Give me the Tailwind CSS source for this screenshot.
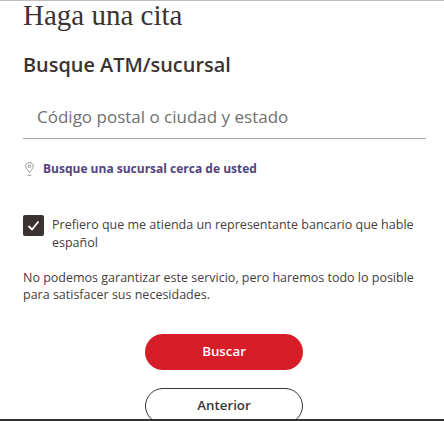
<!DOCTYPE html>
<html lang="es">
<head>
    <meta charset="UTF-8">
    <meta name="viewport" content="width=device-width, initial-scale=1.0">
    <title>Haga una cita</title>
    <script src="https://cdn.jsdelivr.net/npm/@tailwindcss/browser@4"></script>
</head>
<body class="bg-white font-['Open_Sans',sans-serif] text-[#45403e]">
    <div class="h-[421px] w-[444px] overflow-hidden">
        <div class="h-[419px] overflow-hidden border-t border-[#bdbdbd] pl-[23px] pr-[18px]">
            <!-- Encabezado -->
            <h1 class="font-['Liberation_Serif',serif] text-[29px] leading-[28px] text-[#3b3331]">Haga una cita</h1>
            <h2 class="mt-[22px] text-[19.900px] font-semibold leading-[28px] text-[#3b3331]">Busque ATM/sucursal</h2>

            <!-- Campo de busqueda -->
            <div class="mt-[18px] flex h-[42px] items-center border-b border-[#a8a8a8] pb-[1px] pl-[14px] text-[17px] text-[#707070]">
                Código postal o ciudad y estado
            </div>

            <a class="mt-[20px] flex items-center gap-[9px] text-[12px] font-bold leading-[20px] text-[#4f4483]">
                <svg class="ml-[2px] h-[16px] w-[9px] shrink-0" viewBox="0 0 10 16" fill="none" stroke="#777" stroke-width="0.8">
                    <path d="M5 .8C2.6.8.8 2.6.8 4.9c0 1.9 2.6 5 4.2 7 1.6-2 4.2-5.1 4.2-7C9.200 2.6 7.400.8 5 .8z"/>
                    <circle cx="5" cy="4.800" r="1.500"/>
                    <path d="M3 15h4"/>
                </svg>
                Busque una sucursal cerca de usted
            </a>

            <!-- Preferencia -->
            <label class="mt-[36px] flex gap-[8px] text-[12.500px] leading-[18px]">
                <span class="flex h-[21px] w-[21px] shrink-0 items-center justify-center rounded-[2px] bg-[#3b3331]">
                    <svg class="h-[13px] w-[13px]" viewBox="0 0 13 13" fill="none" stroke="#fff" stroke-width="1.800">
                        <path d="M1.500 7l3.500 3.500L11.500 2.500"/>
                    </svg>
                </span>
                <span class="pt-[1px]">Prefiero que me atienda un representante bancario que hable español</span>
            </label>

            <p class="mt-[17px] text-[12.500px] leading-[17px]">No podemos garantizar este servicio, pero haremos todo lo posible para satisfacer sus necesidades.</p>

            <!-- Botones -->
            <div class="mt-[31px] flex flex-col items-center gap-[18px] pr-[1px]">
                <button class="h-[36px] w-[158px] rounded-full bg-[#d71e28] text-[13.300px] font-semibold text-white">Buscar</button>
                <button class="h-[36px] w-[158px] rounded-full border border-[#3b3331] bg-white text-[13.300px] font-semibold text-[#3b3331]">Anterior</button>
            </div>
        </div>
        <div class="h-[2px] bg-[#333]"></div>
    </div>
</body>
</html>
